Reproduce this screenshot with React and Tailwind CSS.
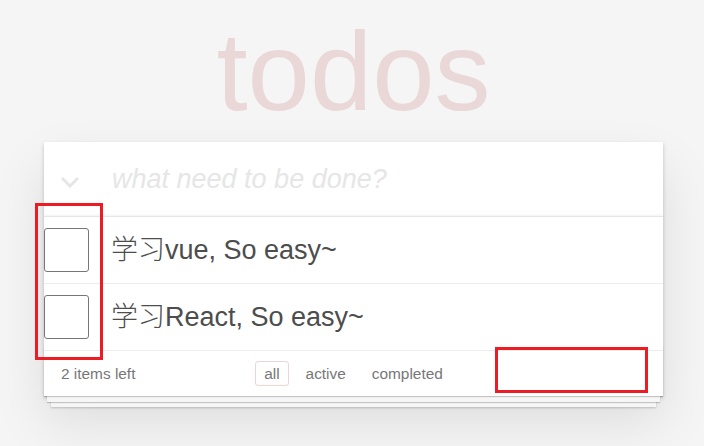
import React, { useState } from 'react';

const todos = [
    { id: 1, title: '学习vue, So easy~' },
    { id: 2, title: '学习React, So easy~' },
];

const filters = ['all', 'active', 'completed'];

const App = () => {
    const [text, setText] = useState('');
    const [filter, setFilter] = useState('all');

    return (
        <div className="relative min-h-screen w-full bg-[#f5f5f5] font-['Liberation_Sans','Noto_Sans_CJK_SC',sans-serif] text-[#4d4d4d]">
            <div className="ml-[44px] w-[619px] pt-[16px]">
                {/* title */}
                <h1 className="text-center text-[112px] leading-none font-thin text-[rgba(175,47,47,0.15)]">
                    todos
                </h1>

                {/* card */}
                <section className="relative mt-[14px] bg-white shadow-[0_2px_4px_rgba(0,0,0,0.2),0_25px_50px_rgba(0,0,0,0.1)]">
                    <header className="flex h-[75px] items-center border-b border-[#e6e6e6] shadow-[inset_0_-2px_1px_rgba(0,0,0,0.03)]">
                        <div className="flex w-[68px] items-center pl-[16px] pt-[5px]">
                            <svg width="20" height="12" viewBox="0 0 20 12" fill="none">
                                <polyline points="2,2 10,10 18,2" stroke="#e6e6e6" strokeWidth="3" />
                            </svg>
                        </div>
                        <input
                            type="text"
                            value={text}
                            onChange={(e) => setText(e.target.value)}
                            placeholder="what need to be done?"
                            className="flex-1 bg-transparent text-[27px] text-[#4d4d4d] outline-none placeholder:italic placeholder:text-[#e6e6e6]"
                        />
                    </header>

                    <ul>
                        {todos.map((todo) => (
                            <li key={todo.id} className="flex h-[67px] items-center border-b border-[#ededed]">
                                <div className="h-[44px] w-[45px] rounded-[3px] border border-[#767676] bg-white" />
                                <span className="ml-[22px] text-[27px] leading-none font-light text-[#4d4d4d]">{todo.title}</span>
                            </li>
                        ))}
                    </ul>

                    <footer className="relative grid h-[45px] grid-cols-[1fr_auto_1fr] items-center text-[15.4px] text-[#777]">
                        {/* stacked sheets under the card */}
                        <div className="pointer-events-none absolute inset-x-0 bottom-0 h-[50px] shadow-[0_1px_1px_rgba(0,0,0,0.2),0_9px_0_-3px_#f6f6f6,0_10px_1px_-3px_rgba(0,0,0,0.2),0_18px_0_-7px_#f6f6f6,0_19px_2px_-7px_rgba(0,0,0,0.2)]" />
                        <span className="relative pl-[17px]">2 items left</span>
                        <ul className="relative flex gap-[8px]">
                            {filters.map((f) => (
                                <li key={f}>
                                    <button
                                        onClick={() => setFilter(f)}
                                        className={
                                            filter === f
                                                ? 'rounded-[3px] border border-[rgba(175,47,47,0.2)] px-[8px] py-[3px] leading-[17px]'
                                                : 'rounded-[3px] border border-transparent px-[8px] py-[3px] leading-[17px]'
                                        }
                                    >
                                        {f}
                                    </button>
                                </li>
                            ))}
                        </ul>
                        <span />
                    </footer>
                </section>
            </div>

            {/* red annotation boxes */}
            <div className="pointer-events-none absolute left-[35px] top-[203px] h-[157px] w-[68px] border-[3px] border-[#ed1c24]" />
            <div className="pointer-events-none absolute left-[495px] top-[347px] h-[46px] w-[153px] border-[3px] border-[#ed1c24]" />
        </div>
    );
};

export default App;
